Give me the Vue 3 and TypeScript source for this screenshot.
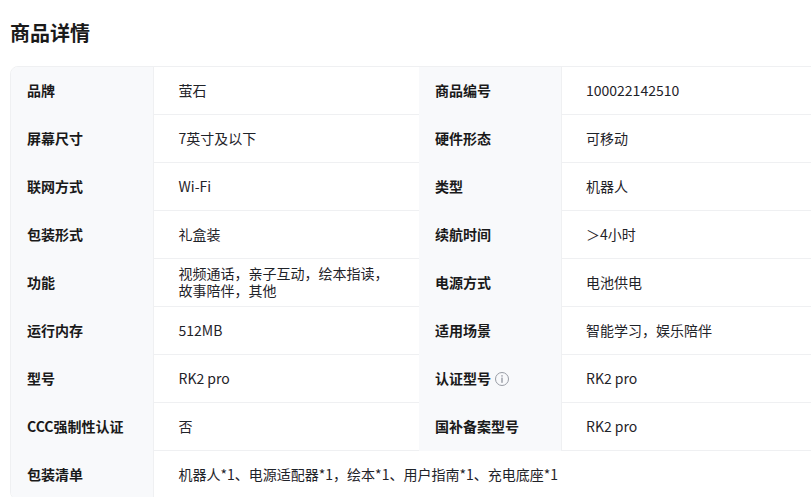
<script setup lang="ts">
interface Cell { label: string; value: string; info?: boolean }
const rows: Cell[][] = [
  [{ label: '品牌', value: '萤石' }, { label: '商品编号', value: '100022142510' }],
  [{ label: '屏幕尺寸', value: '7英寸及以下' }, { label: '硬件形态', value: '可移动' }],
  [{ label: '联网方式', value: 'Wi-Fi' }, { label: '类型', value: '机器人' }],
  [{ label: '包装形式', value: '礼盒装' }, { label: '续航时间', value: '＞4小时' }],
  [{ label: '功能', value: '视频通话，亲子互动，绘本指读，故事陪伴，其他' }, { label: '电源方式', value: '电池供电' }],
  [{ label: '运行内存', value: '512MB' }, { label: '适用场景', value: '智能学习，娱乐陪伴' }],
  [{ label: '型号', value: 'RK2 pro' }, { label: '认证型号', value: 'RK2 pro', info: true }],
  [{ label: 'CCC强制性认证', value: '否' }, { label: '国补备案型号', value: 'RK2 pro' }],
]
</script>

<template>
  <main class="page">
    <h2 class="title">商品详情</h2>
    <section class="card">
      <div v-for="(row, i) in rows" :key="i" class="row">
        <template v-for="cell in row" :key="cell.label">
          <div class="label">
            {{ cell.label }}
            <svg v-if="cell.info" class="info" width="14" height="14" viewBox="0 0 14 14" fill="none">
              <circle cx="7" cy="7" r="6.5" stroke="#989ca4" />
              <rect x="6.3" y="3.2" width="1.4" height="1.4" fill="#989ca4" />
              <rect x="6.3" y="5.6" width="1.4" height="5.2" fill="#989ca4" />
            </svg>
          </div>
          <div class="value"><span class="text">{{ cell.value }}</span></div>
        </template>
      </div>
      <div class="row last">
        <div class="label">包装清单</div>
        <div class="value wide">机器人*1、电源适配器*1，绘本*1、用户指南*1、充电底座*1</div>
      </div>
    </section>
  </main>
</template>

<style scoped>
.page {
  width: 811px;
  height: 497px;
  overflow: hidden;
  background: #fff;
  font-family: "Noto Sans CJK SC", "Noto Sans", sans-serif;
  color: #1a1a1a;
  box-sizing: border-box;
  padding: 18px 0 0 10px;
}
.title {
  margin: 0 0 18px;
  font-size: 20px;
  line-height: 30px;
  font-weight: 700;
  color: #1a1a1a;
}
.card {
  width: 860px;
  border: 1px solid #eff0f2;
  border-radius: 8px;
  overflow: hidden;
}
.row {
  display: grid;
  grid-template-columns: 143px 265px 143px 1fr;
  height: 48px;
}
.last {
  grid-template-columns: 143px 1fr;
}
.label {
  display: flex;
  align-items: center;
  gap: 4px;
  padding: 0 0 2px 16px;
  background: #f8f9fb;
  border-right: 1px solid #eff0f2;
  font-size: 14px;
  font-weight: 700;
  color: #1a1a1a;
}
.value {
  display: flex;
  align-items: center;
  padding: 0 25px 1px 24.5px;
  border-bottom: 1px solid #eff0f2;
  font-size: 14px;
  line-height: 17px;
  color: #1f2329;
}
.value:nth-child(4) {
  padding-left: 24px;
}
.row:last-child .value {
  border-bottom: 0;
}
.text {
  max-width: 216px;
}
.info {
  position: relative;
  top: 1px;
}
</style>

<style>
html, body { margin: 0; overflow: hidden; background: #fff; }
</style>
